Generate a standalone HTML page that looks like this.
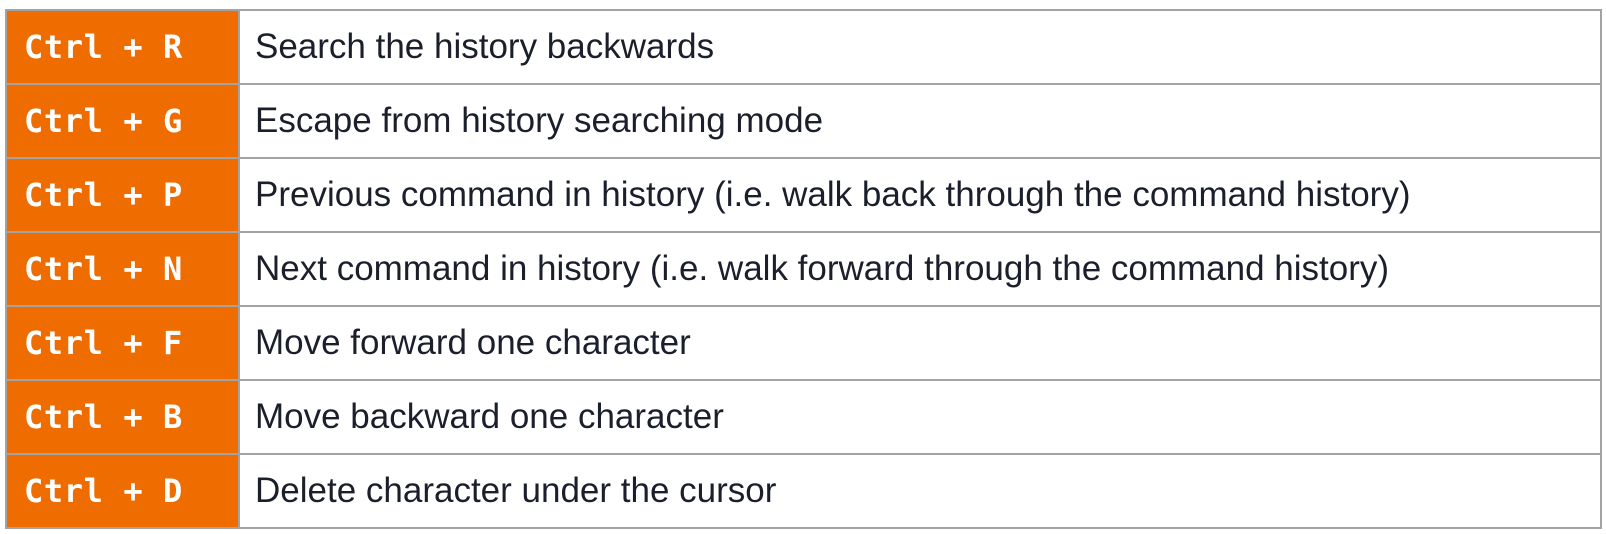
<!DOCTYPE html>
<html><head><style>
html,body{margin:0;padding:0;background:#fff;width:1606px;height:534px;overflow:hidden}
table{position:absolute;left:5px;top:9px;border-collapse:collapse;width:1597px}
td{border:2px solid #a3a3a3;height:72px;padding:0;vertical-align:middle;box-sizing:border-box}
tr{height:74px}
td.k{width:233px;background:#ee6c00;color:#fff;font-family:"DejaVu Sans Mono","Liberation Mono",monospace;font-weight:bold;font-size:32px;letter-spacing:0.6px;padding-left:17px;white-space:pre}
td.d{font-family:"Liberation Sans",sans-serif;font-size:35px;color:#1a1f2b;padding-left:15px;white-space:nowrap}
</style></head><body>
<table>
<tr><td class="k">Ctrl + R</td><td class="d">Search the history backwards</td></tr>
<tr><td class="k">Ctrl + G</td><td class="d">Escape from history searching mode</td></tr>
<tr><td class="k">Ctrl + P</td><td class="d">Previous command in history (i.e. walk back through the command history)</td></tr>
<tr><td class="k">Ctrl + N</td><td class="d">Next command in history (i.e. walk forward through the command history)</td></tr>
<tr><td class="k">Ctrl + F</td><td class="d">Move forward one character</td></tr>
<tr><td class="k">Ctrl + B</td><td class="d">Move backward one character</td></tr>
<tr><td class="k">Ctrl + D</td><td class="d">Delete character under the cursor</td></tr>
</table>
</body></html>
